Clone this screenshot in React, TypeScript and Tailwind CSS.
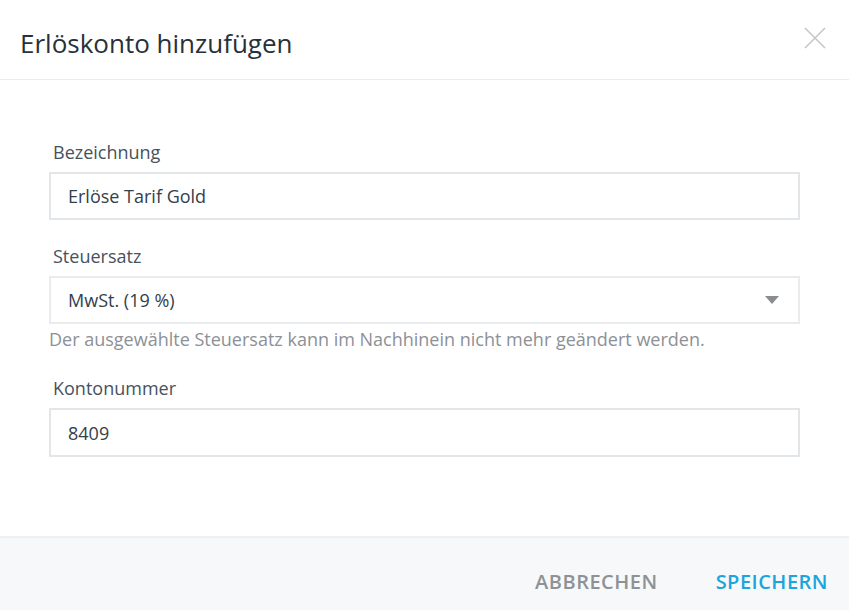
import { useState } from "react";

const FONT = "font-['Open_Sans','Noto_Sans',sans-serif]";

function Feld({ label, children }: { label: string; children: React.ReactNode }) {
  return (
    <div className="flex flex-col">
      <label className="text-[18px] leading-[24px] text-[#46525c] pl-[4px] mb-[8px]">{label}</label>
      {children}
    </div>
  );
}

export default function App() {
  const [bezeichnung, setBezeichnung] = useState("Erlöse Tarif Gold");
  const [konto, setKonto] = useState("8409");

  return (
    <div className={`w-[849px] h-[610px] bg-white flex flex-col ${FONT}`}>
      {/* Kopf */}
      <div className="h-[80px] flex items-center justify-between pl-[20px] pr-[22px] border-b border-[#ebedef]">
        <h1 className="text-[26px] text-[#27313b] leading-none pt-[6px]">Erlöskonto hinzufügen</h1>
        <button className="w-[24px] h-[24px] flex items-center justify-center mb-[4px]">
          <svg viewBox="0 0 24 24" width={24} height={24} fill="none" stroke="#c4c6c8" strokeWidth={1.6}>
            <path d="M2 2l20 20M22 2L2 22" />
          </svg>
        </button>
      </div>

      {/* Formular */}
      <div className="flex-1 px-[49px] pt-[60px] flex flex-col">
        <Feld label="Bezeichnung">
          <input
            value={bezeichnung}
            onChange={(e) => setBezeichnung(e.target.value)}
            className="h-[48px] border-2 border-[#e2e6e9] px-[17px] text-[18px] text-[#34404a] outline-none"
          />
        </Feld>

        <div className="mt-[24px]">
          <Feld label="Steuersatz">
            <div className="h-[48px] border-2 border-[#e9ebec] px-[17px] flex items-center justify-between">
              <span className="text-[18px] text-[#34404a]">MwSt. (19 %)</span>
              <svg viewBox="0 0 14 8" width={14} height={8} className="mr-[2px]">
                <path d="M0 0h14L7 8z" fill="#8a8d90" />
              </svg>
            </div>
          </Feld>
          <p className="text-[18px] text-[#8c9196] mt-[3px] leading-[24px]">
            Der ausgewählte Steuersatz kann im Nachhinein nicht mehr geändert werden.
          </p>
        </div>

        <div className="mt-[25px]">
          <Feld label="Kontonummer">
            <input
              value={konto}
              onChange={(e) => setKonto(e.target.value)}
              className="h-[49px] border-2 border-[#e2e6e9] px-[17px] text-[18px] text-[#34404a] outline-none"
            />
          </Feld>
        </div>
      </div>

      {/* Fuß */}
      <div className="h-[74px] bg-[#f7f8fa] border-t-2 border-[#eff0f2] flex items-center justify-end pr-[21px] pt-[16px] gap-[58px]">
        <button className="text-[20px] font-semibold tracking-[0.5px] text-[#8e9296]">ABBRECHEN</button>
        <button className="text-[20px] font-semibold tracking-[0.5px] text-[#1aa5dc]">SPEICHERN</button>
      </div>
    </div>
  );
}
